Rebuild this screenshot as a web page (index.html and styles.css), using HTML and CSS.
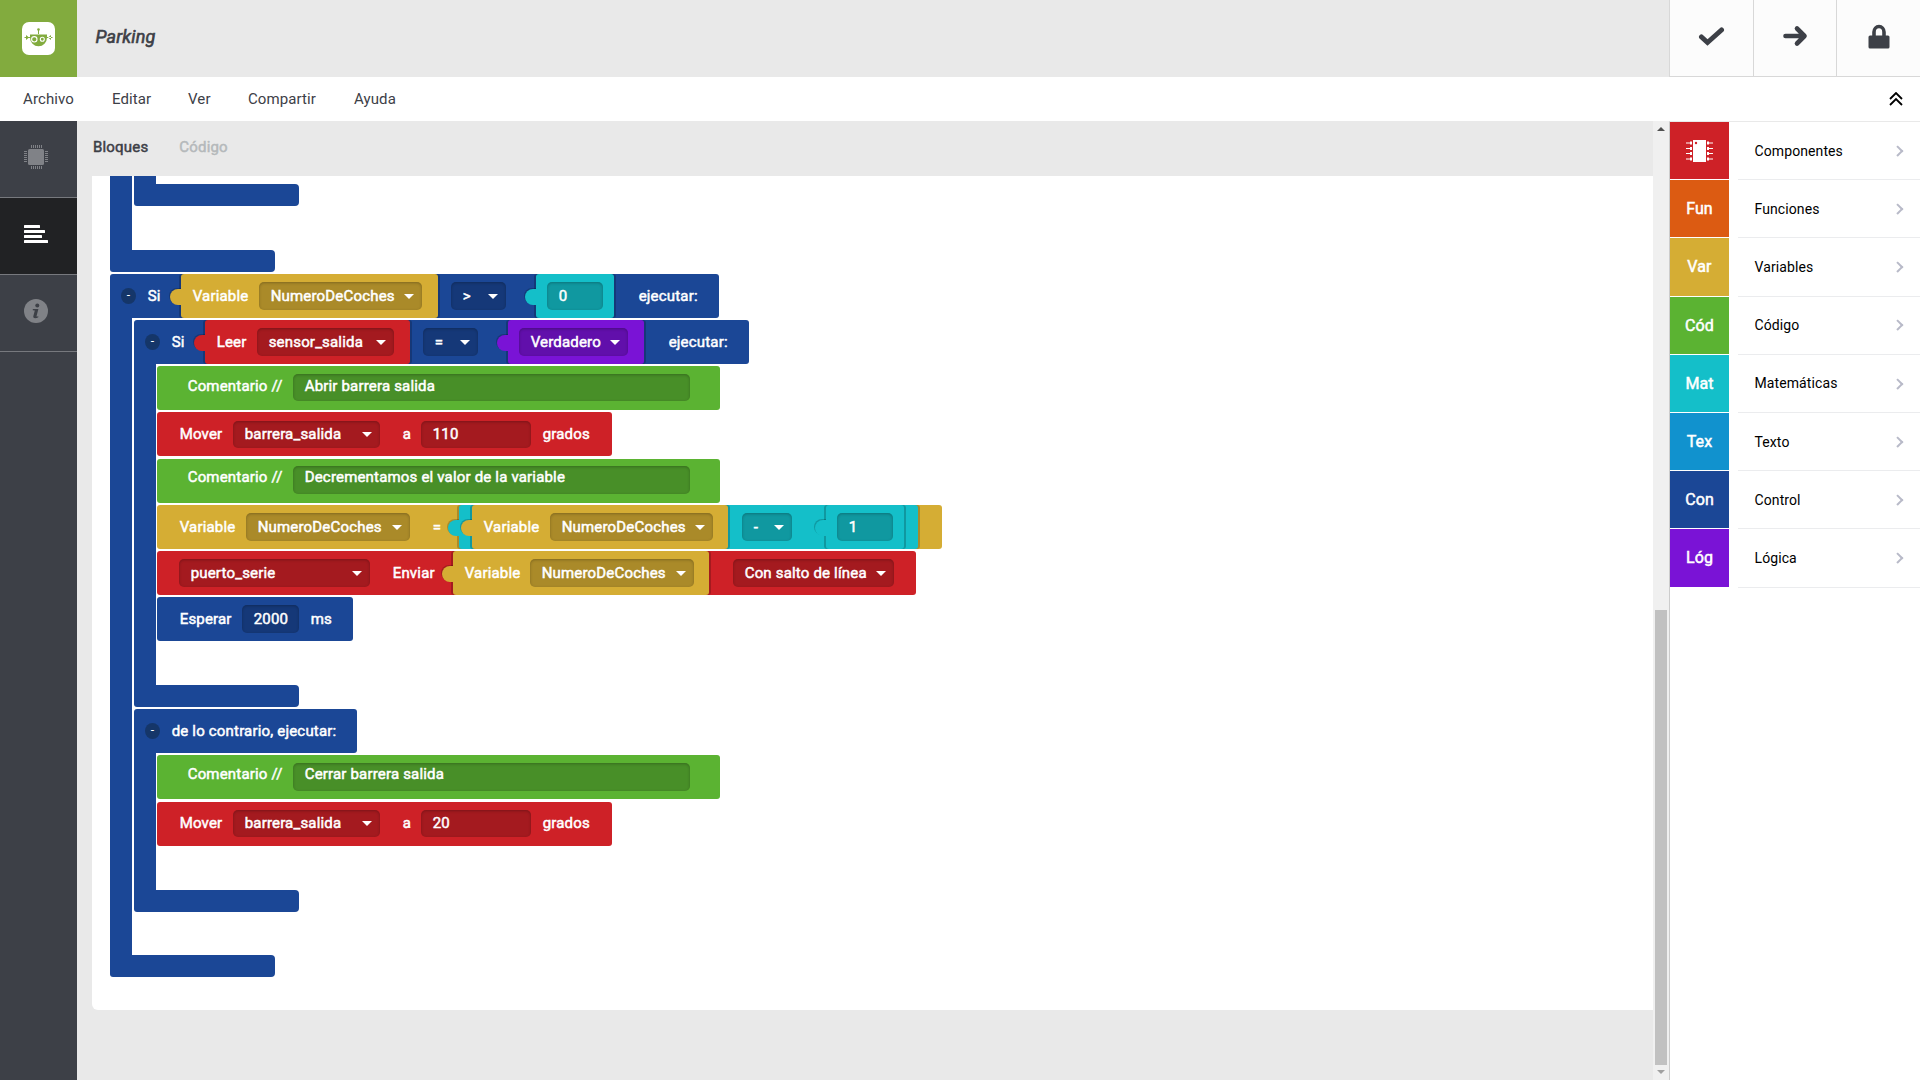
FILE: index.html
```
<!DOCTYPE html>
<html lang="es">
<head>
<meta charset="utf-8">
<title>Parking</title>
<link rel="stylesheet" href="styles.css">
</head>
<body>
<header class="header">
  <div class="logo">
    <svg width="33" height="33" viewBox="0 0 33 33"><rect width="33" height="33" rx="7" fill="#fff"/><g fill="#82ab3e"><circle cx="16.500" cy="7.500" r="1.300"/><path d="M16 8h1v4h-1zM8 12.500h17v3a8.500 8.700 0 0 1-17 0z"/><path d="M2.500 15h5.500v1H2.500zM25 15h5.500v1H25zM4 13l3 2.500L4 18zM29 13l-3 2.500 3 2.500z"/></g><circle cx="12.300" cy="17.300" r="2.700" fill="none" stroke="#fff" stroke-width="1.100"/><circle cx="20.300" cy="17.300" r="2" fill="none" stroke="#fff" stroke-width="1.100"/></svg>
  </div>
  <h1 class="title">Parking</h1>
  <div class="action"><svg width="27" height="21" viewBox="0 0 27 21"><path d="M3.500 11l6 5.500L23.500 4" fill="none" stroke="#3d4047" stroke-width="5" stroke-linecap="round"/></svg></div>
  <div class="action"><svg width="26" height="22" viewBox="0 0 26 22"><path d="M3.500 11h18M15 3.500L22.500 11 15 18.500" fill="none" stroke="#3d4047" stroke-width="4.600" stroke-linecap="round" stroke-linejoin="round"/></svg></div>
  <div class="action"><svg width="22" height="25" viewBox="0 0 22 25"><rect x=".5" y="11.500" width="21" height="13" rx="1.500" fill="#3d4047"/><path d="M6 13V8a5 5.500 0 0 1 10 0v5" fill="none" stroke="#3d4047" stroke-width="3.600"/></svg></div>
</header>
<nav class="menu">
  <a class="m1">Archivo</a><a class="m2">Editar</a><a class="m3">Ver</a><a class="m4">Compartir</a><a>Ayuda</a>
  <svg class="collapse" width="14" height="14" viewBox="0 0 14 14"><path d="M1 7l6-6 6 6M1 13l6-6 6 6" fill="none" stroke="#000" stroke-width="1.800"/></svg>
</nav>
<main class="main">
  <aside class="side">
    <div class="side-item"><svg width="24" height="24" viewBox="0 0 24 24"><rect x="4" y="4" width="16" height="16" rx="1.500" fill="#808287"/><path d="M7.500 0v3M9.500 0v3M11.500 0v3M13.500 0v3M15.500 0v3M17.500 0v3M7.500 21v3M9.500 21v3M11.500 21v3M13.500 21v3M15.500 21v3M17.500 21v3M0 6.500h3M0 8.500h3M0 10.500h3M0 12.500h3M0 14.500h3M0 16.500h3M21 6.500h3M21 8.500h3M21 10.500h3M21 12.500h3M21 14.500h3M21 16.500h3" stroke="#808287"/></svg></div>
    <div class="side-item active"><svg width="24" height="18" viewBox="0 0 24 18" fill="#fff"><rect width="16" height="3" rx=".5"/><rect y="5" width="21" height="3" rx=".5"/><rect y="10" width="18" height="3" rx=".5"/><rect y="15" width="24" height="3" rx=".5"/></svg></div>
    <div class="side-item"><svg width="24" height="24" viewBox="0 0 24 24"><circle cx="12" cy="12" r="12" fill="#808287"/><g fill="#3d4047"><circle cx="13.300" cy="6.500" r="2"/><path d="M8.800 10h5.600l-1.900 7.200c0 .7.900.4 1.800 0v1c-2 1.300-5.500 1.600-5 -.9l1.500-5.700-2-.3z"/></g></svg></div>
  </aside>
  <section class="work">
    <div class="tabs"><span class="tab on">Bloques</span><span class="tab">Código</span></div>
    <div class="canvas">
      <div class="group first">
        <div class="body"><div class="group cut"><div class="body"></div><div class="foot"></div></div></div>
        <div class="foot"></div>
      </div>
      <div class="group">
        <div class="row control w609">
          <span class="toggle">-</span><span class="label w34">Si</span>
          <div class="plug variable w257"><span class="label w67">Variable</span><span class="field w163">NumeroDeCoches</span></div>
          <span class="field g13 w55">&gt;</span>
          <div class="plug math g30 w78"><span class="field text w56">0</span></div>
          <span class="label g24">ejecutar:</span>
        </div>
        <div class="body outer">
          <div class="group">
            <div class="row control w615">
              <span class="toggle">-</span><span class="label w34">Si</span>
              <div class="plug comp w205"><span class="label w41">Leer</span><span class="field w137">sensor_salida</span></div>
              <span class="field g13 w55">=</span>
              <div class="plug logic g30 w136"><span class="field w109">Verdadero</span></div>
              <span class="label g24">ejecutar:</span>
            </div>
            <div class="body steps">
              <div class="row code w563"><span class="label w106">Comentario //</span><span class="field text w397">Abrir barrera salida</span></div>
              <div class="row comp move late w455"><span class="label w54">Mover</span><span class="field w147">barrera_salida</span><span class="label g22 w19">a</span><span class="field text w110">110</span><span class="label g11">grados</span></div>
              <div class="row code high w563"><span class="label w106">Comentario //</span><span class="field text w397">Decrementamos el valor de la variable</span></div>
              <div class="row variable w785">
                <span class="label w67">Variable</span><span class="field w164">NumeroDeCoches</span><span class="label g22 w27">=</span>
                <div class="plug math w459">
                  <div class="plug variable w256"><span class="label w67">Variable</span><span class="field w163">NumeroDeCoches</span></div>
                  <span class="field g14 w50">-</span>
                  <div class="plug math g34 w78"><span class="field text w56">1</span></div>
                </div>
              </div>
              <div class="row comp w759">
                <span class="field w191">puerto_serie</span><span class="label g22 w61">Enviar</span>
                <div class="plug variable w256"><span class="label w66">Variable</span><span class="field w164">NumeroDeCoches</span></div>
                <span class="field g24 w161">Con salto de línea</span>
              </div>
              <div class="row control w196"><span class="label w63">Esperar</span><span class="field text w57">2000</span><span class="label g11">ms</span></div>
            </div>
            <div class="foot"></div>
          </div>
          <div class="group">
            <div class="row control w223"><span class="toggle">-</span><span class="label">de lo contrario, ejecutar:</span></div>
            <div class="body steps">
              <div class="row code tall w563"><span class="label w106">Comentario //</span><span class="field text w397">Cerrar barrera salida</span></div>
              <div class="row comp move lower w455"><span class="label w54">Mover</span><span class="field w147">barrera_salida</span><span class="label g22 w19">a</span><span class="field text w110">20</span><span class="label g11">grados</span></div>
            </div>
            <div class="foot"></div>
          </div>
        </div>
        <div class="foot"></div>
      </div>
    </div>
  </section>
  <div class="scroll"><i class="up"></i><div class="thumb"></div><i class="down"></i></div>
  <aside class="palette">
    <div class="cat"><b class="comp"><svg width="27" height="22" viewBox="0 0 27 22"><rect x="7" width="13" height="22" fill="#fff"/><circle cx="10" cy="3" r="1.200" fill="#ce2127"/><path d="M0 3h6M0 8.500h6M0 13.500h6M0 19h6M21 3h6M21 8.500h6M21 13.500h6M21 19h6" stroke="#fff"/><path d="M4 1.500h2v3H4zM4 7h2v3H4zM4 12h2v3H4zM4 17.500h2v3H4zM21 1.500h2v3h-2zM21 7h2v3h-2zM21 12h2v3h-2zM21 17.500h2v3h-2z" fill="#fff"/></svg></b><span>Componentes</span></div>
    <div class="cat"><b class="func">Fun</b><span>Funciones</span></div>
    <div class="cat"><b class="variable">Var</b><span>Variables</span></div>
    <div class="cat"><b class="code">Cód</b><span>Código</span></div>
    <div class="cat"><b class="math">Mat</b><span>Matemáticas</span></div>
    <div class="cat"><b class="texto">Tex</b><span>Texto</span></div>
    <div class="cat"><b class="control">Con</b><span>Control</span></div>
    <div class="cat"><b class="logic">Lóg</b><span>Lógica</span></div>
  </aside>
</main>
</body>
</html>
```
FILE: styles.css
```
* { box-sizing: border-box; }
body { margin: 0; height: 1080px; overflow: hidden; display: flex; flex-direction: column; font-family: Roboto, "Liberation Sans", sans-serif; font-size: 15px; color: #3d4047; background: #fff; }

.header { display: flex; height: 77px; background: #e9e9e9; }
.logo { width: 77px; background: #82ab3e; display: flex; align-items: center; justify-content: center; }
.title { flex: 1; margin: 0; padding: 0 0 4px 18.500px; align-self: center; font-size: 18px; font-weight: 400; font-style: italic; letter-spacing: .15px; -webkit-text-stroke: .6px; }
.action { width: 83.670px; border-left: 1px solid #d8d8d8; border-bottom: 1px solid #d8d8d8; background: #fcfcfc; display: flex; align-items: center; justify-content: center; padding-bottom: 4px; }

.menu { height: 44px; display: flex; align-items: center; padding: 0 17px 0 23px; letter-spacing: .1px; }
.m1 { width: 89px; }
.m2 { width: 76px; }
.m3 { width: 60px; }
.m4 { width: 106px; }
.collapse { margin-left: auto; }

.main { flex: 1; display: flex; min-height: 0; }
.side { width: 77px; background: #3d4047; }
.side-item { height: 77px; border-bottom: 1px solid #77797e; display: flex; align-items: center; padding: 0 0 5px 24px; }
.side-item.active { background: #212224; padding-top: 0; }

.work { flex: 1; background: #e9e9e9; padding-left: 15px; }
.tabs { height: 55px; display: flex; align-items: center; gap: 31px; padding: 0 0 3px 1px; letter-spacing: .18px; }
.tab { color: #b5b9bb; -webkit-text-stroke: .5px; }
.tab.on { color: #3d4047; }
.canvas { height: 834px; background: #fff; border-radius: 0 0 0 6px; padding-left: 18px; overflow: hidden; }

.group { margin-bottom: 2px; width: max-content; }
.body { border-left: 22px solid #1b4796; padding: 2px 0 0 2px; }
.foot { width: 165px; height: 22px; background: #1b4796; border-radius: 0 4px 4px 3px; }
.first > .body { height: 74px; padding-top: 0; }
.cut > .body { height: 8px; padding: 0; }
.outer { padding-bottom: 41px; }
.steps { padding: 2px 0 42px 1px; display: flex; flex-direction: column; gap: 2px; }
.outer .steps { padding-bottom: 44px; }

.row { height: 44px; border-radius: 3px; display: flex; align-items: center; color: #fff; padding-left: 22px; letter-spacing: .18px; }
.row.control:has(.toggle) { padding-left: 11px; border-bottom-left-radius: 0; }
.row.code { padding-left: 30px; padding-bottom: 1px; }
.row.code .label, .row.code .field { line-height: 24px; height: 27px; padding-top: 0; align-items: flex-start; }
.row.high .label, .row.high .field { height: 28px; line-height: 23px; }
.row.tall .label, .row.tall .field { height: 28px; line-height: 23px; }
.row.tall { padding-bottom: 0; }
.row.high { margin-top: 1px; padding-bottom: 2px; }
.late { padding-top: 1px; }
.lower { margin-top: 1px; padding-bottom: 1px; }
.toggle { width: 15px; height: 16px; margin-right: 11px; border-radius: 50%; background: #153669; font-size: 12px; line-height: 14px; text-align: center; }
.label, .field { flex: none; white-space: nowrap; text-indent: .7px; -webkit-text-stroke: .5px; }
.label { padding-bottom: 1px; }
.field { display: flex; align-items: center; height: 28px; padding: 0 8px 1px 11px; border-radius: 5px; background: rgba(0,0,0,.2); box-shadow: inset 0 1px 3px rgba(0,0,0,.25); }
.move > .field { height: 27px; padding-bottom: 2px; }
.move > .label { padding-bottom: 2px; }
.field:not(.text)::after { content: ""; margin: 2px 0 0 auto; border: 5px solid transparent; border-top-color: #fff; border-bottom: 0; }

.plug { position: relative; flex: none; height: 44px; display: flex; align-items: center; padding-left: 11px; border-radius: 3px; background: var(--c); box-shadow: -2px 0 0 rgba(0,0,0,.2), 2px 0 0 rgba(0,0,0,.2); }
.plug::before { content: ""; position: absolute; left: -11px; top: 15px; width: 12px; height: 16px; border-radius: 8px 0 0 8px; background: var(--c); box-shadow: -1px -1px 0 rgba(0,0,0,.2); }

.comp { --c: #ce2127; background: var(--c); }
.func { --c: #dc5b12; background: var(--c); }
.variable { --c: #d5ad34; background: var(--c); }
.code { --c: #5bb332; background: var(--c); }
.math { --c: #14bfc9; background: var(--c); }
.texto { --c: #1192ce; background: var(--c); }
.control { --c: #1b4796; background: var(--c); }
.logic { --c: #7a13d6; background: var(--c); }

.g11 { margin-left: 11px; }
.g13 { margin-left: 13px; }
.g14 { margin-left: 14px; }
.g22 { margin-left: 22px; }
.g24 { margin-left: 24px; }
.g30 { margin-left: 30px; }
.g34 { margin-left: 34px; }
.w19 { width: 19px; }
.w27 { width: 27px; }
.w34 { width: 34px; }
.w41 { width: 41px; }
.w50 { width: 50px; }
.w54 { width: 54px; }
.w55 { width: 55px; }
.w56 { width: 56px; }
.w57 { width: 57px; }
.w61 { width: 61px; }
.w63 { width: 63px; }
.w66 { width: 66px; }
.w67 { width: 67px; }
.w78 { width: 78px; }
.w106 { width: 106px; }
.w109 { width: 109px; }
.w110 { width: 110px; }
.w136 { width: 136px; }
.w137 { width: 137px; }
.w147 { width: 147px; }
.w161 { width: 161px; }
.w163 { width: 163px; }
.w164 { width: 164px; }
.w191 { width: 191px; }
.w196 { width: 196px; }
.w205 { width: 205px; }
.w223 { width: 223px; }
.w256 { width: 256px; }
.w257 { width: 257px; }
.w397 { width: 397px; }
.w455 { width: 455px; }
.w459 { width: 459px; padding-left: 13px; }
.w563 { width: 563px; }
.w609 { width: 609px; }
.w615 { width: 615px; }
.w759 { width: 759px; }
.w785 { width: 785px; }

.scroll { width: 16px; background: #f0f0f0; display: flex; flex-direction: column; align-items: center; padding: 6px 0; }
.up, .down { border: 4px solid transparent; }
.up { border-top: 0; border-bottom-color: #505050; }
.down { border-bottom: 0; border-top-color: #a0a0a0; margin-top: auto; }
.thumb { width: 12px; height: 455px; margin-top: 479px; background: #c1c1c1; }

.palette { width: 251px; border-left: 1px solid #ccc; border-top: 1px solid #e9e9e9; }
.cat { display: flex; height: 58.200px; color: #000; font-size: 14px; letter-spacing: .1px; }
.cat b { width: 59px; border-bottom: 1px solid #fff; margin-right: 9px; color: #fff; font-size: 16px; font-weight: 400; -webkit-text-stroke: .5px; display: flex; align-items: center; justify-content: center; }
.cat span { flex: 1; border-bottom: 1px solid #ebecee; display: flex; align-items: center; justify-content: space-between; padding: 0 19px 0 16.500px; }
.cat span::after { content: ""; width: 5.500px; height: 5.500px; border: solid #b8bac8; border-width: 2px 2px 0 0; transform: rotate(45deg); }
```
